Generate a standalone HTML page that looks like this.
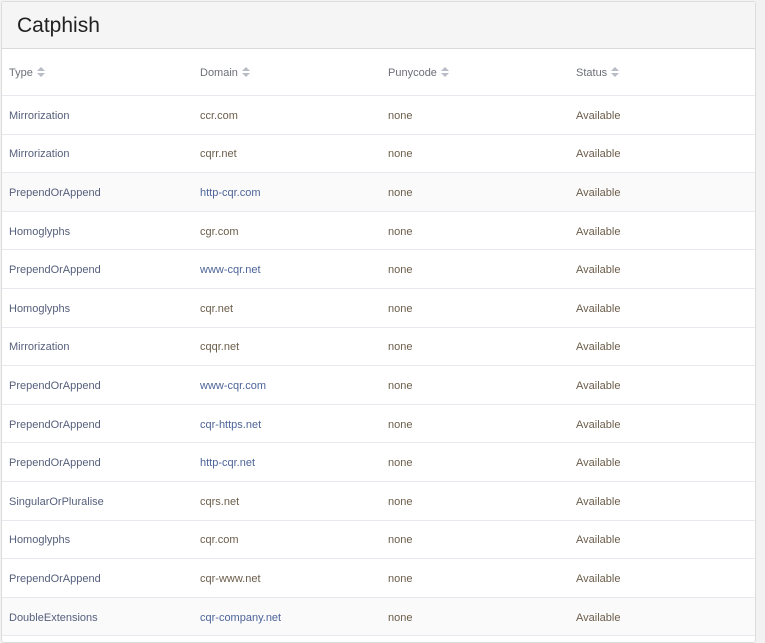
<!DOCTYPE html>
<html><head><style>
html,body{margin:0;padding:0;background:#f2f2f2;width:765px;height:620px;overflow:hidden;font-family:"Liberation Sans",sans-serif}
.panel{position:absolute;left:1px;top:1px;width:753px;height:640px;background:#fff;border:1px solid #dcdcdc;border-radius:3px}
.hd{height:46px;background:#f5f5f5;border-bottom:1px solid #dadada;position:relative}
.hd span{position:absolute;left:15px;top:12px;font-size:21px;color:#222}
table{border-collapse:collapse;width:753px;font-size:11px}
td,th{padding:2px 0 0 7px;text-align:left;border-bottom:1px solid #e8e8ee;height:35.6px;box-sizing:content-box}
th{height:44px;color:#6c6f78;font-weight:normal}
th:nth-child(1){width:184px}th:nth-child(2){width:181px}th:nth-child(3){width:181px}
td:nth-child(1){color:#56607c}
td.b{color:#4d6499}
td.g{color:#6b5d4a}
tr.s td{background:#fafafb}
.ar{display:inline-block;vertical-align:middle;margin-left:4px;width:8px;height:10px;position:relative;top:-1px}
</style></head><body>
<div class="panel">
<div class="hd"><span>Catphish</span></div>
<table>
<tr><th>Type<svg class="ar" viewBox="0 0 8 10"><path d="M0 4L4 0L8 4Z M0 6L4 10L8 6Z" fill="#b8bcc6"/></svg></th><th>Domain<svg class="ar" viewBox="0 0 8 10"><path d="M0 4L4 0L8 4Z M0 6L4 10L8 6Z" fill="#b8bcc6"/></svg></th><th>Punycode<svg class="ar" viewBox="0 0 8 10"><path d="M0 4L4 0L8 4Z M0 6L4 10L8 6Z" fill="#b8bcc6"/></svg></th><th>Status<svg class="ar" viewBox="0 0 8 10"><path d="M0 4L4 0L8 4Z M0 6L4 10L8 6Z" fill="#b8bcc6"/></svg></th></tr>
<tr><td>Mirrorization</td><td class="g">ccr.com</td><td class="g">none</td><td class="g">Available</td></tr>
<tr><td>Mirrorization</td><td class="g">cqrr.net</td><td class="g">none</td><td class="g">Available</td></tr>
<tr class="s"><td>PrependOrAppend</td><td class="b">http-cqr.com</td><td class="g">none</td><td class="g">Available</td></tr>
<tr><td>Homoglyphs</td><td class="g">cgr.com</td><td class="g">none</td><td class="g">Available</td></tr>
<tr><td>PrependOrAppend</td><td class="b">www-cqr.net</td><td class="g">none</td><td class="g">Available</td></tr>
<tr><td>Homoglyphs</td><td class="g">cqr.net</td><td class="g">none</td><td class="g">Available</td></tr>
<tr><td>Mirrorization</td><td class="g">cqqr.net</td><td class="g">none</td><td class="g">Available</td></tr>
<tr><td>PrependOrAppend</td><td class="b">www-cqr.com</td><td class="g">none</td><td class="g">Available</td></tr>
<tr><td>PrependOrAppend</td><td class="b">cqr-https.net</td><td class="g">none</td><td class="g">Available</td></tr>
<tr><td>PrependOrAppend</td><td class="b">http-cqr.net</td><td class="g">none</td><td class="g">Available</td></tr>
<tr><td>SingularOrPluralise</td><td class="g">cqrs.net</td><td class="g">none</td><td class="g">Available</td></tr>
<tr><td>Homoglyphs</td><td class="g">cqr.com</td><td class="g">none</td><td class="g">Available</td></tr>
<tr><td>PrependOrAppend</td><td class="g">cqr-www.net</td><td class="g">none</td><td class="g">Available</td></tr>
<tr class="s"><td>DoubleExtensions</td><td class="b">cqr-company.net</td><td class="g">none</td><td class="g">Available</td></tr>
</table>
</div>
</body></html>
